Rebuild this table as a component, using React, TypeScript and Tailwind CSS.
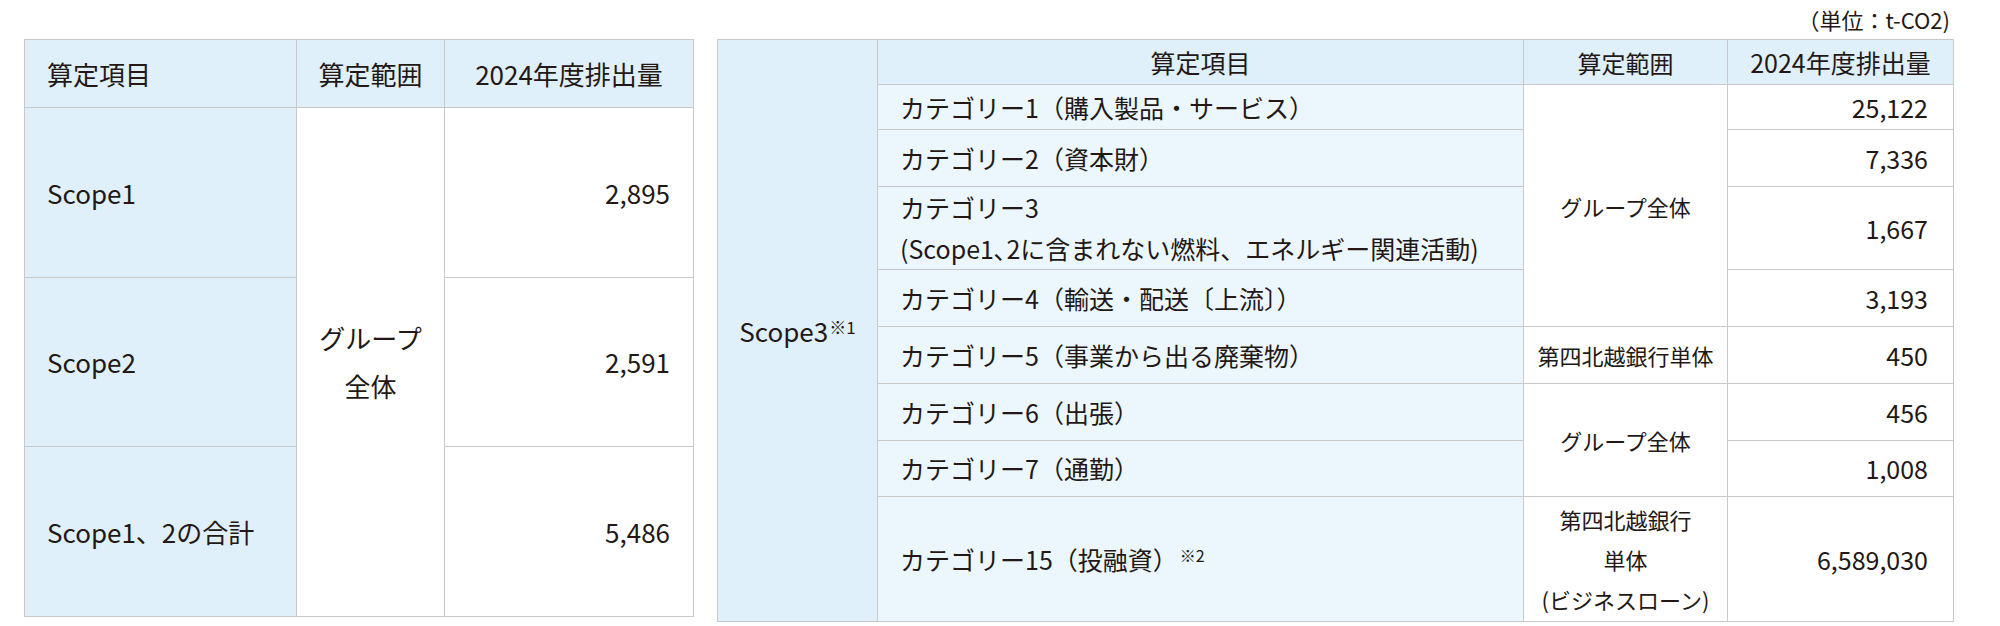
const font = { fontFamily: '"Noto Sans CJK JP", "Noto Sans", sans-serif' };

type Row = {
  label: React.ReactNode;
  h: string;
  range?: { text: React.ReactNode; span: number };
  value: string;
};

const scope3Rows: Row[] = [
  {
    label: 'カテゴリー1（購入製品・サービス）',
    h: 'h-[45px]',
    range: { text: 'グループ全体', span: 4 },
    value: '25,122',
  },
  { label: 'カテゴリー2（資本財）', h: 'h-[57px]', value: '7,336' },
  {
    label: (
      <>
        カテゴリー3
        <br />
        (Scope1､2に含まれない燃料、エネルギー関連活動)
      </>
    ),
    h: 'h-[82px]',
    value: '1,667',
  },
  { label: 'カテゴリー4（輸送・配送〔上流〕）', h: 'h-[57px]', value: '3,193' },
  {
    label: 'カテゴリー5（事業から出る廃棄物）',
    h: 'h-[57px]',
    range: { text: '第四北越銀行単体', span: 1 },
    value: '450',
  },
  {
    label: 'カテゴリー6（出張）',
    h: 'h-[57px]',
    range: { text: 'グループ全体', span: 2 },
    value: '456',
  },
  { label: 'カテゴリー7（通勤）', h: 'h-[56px]', value: '1,008' },
  {
    label: (
      <>
        カテゴリー15（投融資）
        <sup className="ml-[2px] text-[16px]">※2</sup>
      </>
    ),
    h: 'h-[125px]',
    range: {
      text: (
        <>
          第四北越銀行
          <br />
          単体
          <br />
          (ビジネスローン)
        </>
      ),
      span: 1,
    },
    value: '6,589,030',
  },
];

const cell = 'border border-[#c9c9c9]';

function ScopeTable() {
  return (
    <table className="w-[669px] table-fixed border-collapse text-[26px] leading-[48px]">
      <colgroup>
        <col className="w-[272px]" />
        <col className="w-[148px]" />
        <col className="w-[249px]" />
      </colgroup>
      <tbody>
        <tr className="h-[68px] bg-[#dff0fa]">
          <th className={`${cell} pl-[22px] text-left font-normal`}>算定項目</th>
          <th className={`${cell} text-center font-normal`}>算定範囲</th>
          <th className={`${cell} text-center font-normal`}>2024年度排出量</th>
        </tr>
        <tr className="h-[170px]">
          <td className={`${cell} bg-[#dff0fa] pl-[22px]`}>Scope1</td>
          <td rowSpan={3} className={`${cell} bg-white px-[8px] text-center`}>
            グループ
            <br />
            全体
          </td>
          <td className={`${cell} bg-white pr-[23px] text-right`}>2,895</td>
        </tr>
        <tr className="h-[169px]">
          <td className={`${cell} bg-[#dff0fa] pl-[22px]`}>Scope2</td>
          <td className={`${cell} bg-white pr-[23px] text-right`}>2,591</td>
        </tr>
        <tr className="h-[170px]">
          <td className={`${cell} bg-[#dff0fa] pl-[22px]`}>Scope1、2の合計</td>
          <td className={`${cell} bg-white pr-[23px] text-right`}>5,486</td>
        </tr>
      </tbody>
    </table>
  );
}

function Scope3Table() {
  return (
    <table className="w-[1236px] table-fixed border-collapse text-[25px] leading-[41px]">
      <colgroup>
        <col className="w-[160px]" />
        <col className="w-[646px]" />
        <col className="w-[204px]" />
        <col className="w-[226px]" />
      </colgroup>
      <tbody>
        <tr className="h-[45px] bg-[#dff0fa]">
          <th
            rowSpan={scope3Rows.length + 1}
            className={`${cell} text-center text-[26px] font-normal`}
          >
            Scope3
            <sup className="ml-[1px] text-[17px]">※1</sup>
          </th>
          <th className={`${cell} text-center font-normal`}>算定項目</th>
          <th className={`${cell} text-center text-[24px] font-normal`}>算定範囲</th>
          <th className={`${cell} text-center font-normal`}>2024年度排出量</th>
        </tr>
        {scope3Rows.map((r, i) => (
          <tr key={i} className={r.h}>
            <td className={`${cell} bg-[#ecf7fd] pl-[22px]`}>{r.label}</td>
            {r.range && (
              <td
                rowSpan={r.range.span}
                className={`${cell} bg-white text-center text-[22px] leading-[40px]`}
              >
                {r.range.text}
              </td>
            )}
            <td className={`${cell} bg-white pr-[25px] text-right`}>{r.value}</td>
          </tr>
        ))}
      </tbody>
    </table>
  );
}

export default function App() {
  return (
    <div className="h-[626px] w-[2000px] bg-white pl-[24px] text-[#231815]" style={font}>
      <div className="w-[1928px]">
        <div className="flex h-[39px] items-center justify-end pr-[2px] text-[22px]">
          （単位：t-CO2)
        </div>
        <div className="flex items-start gap-[23px]">
          <ScopeTable />
          <Scope3Table />
        </div>
      </div>
    </div>
  );
}
